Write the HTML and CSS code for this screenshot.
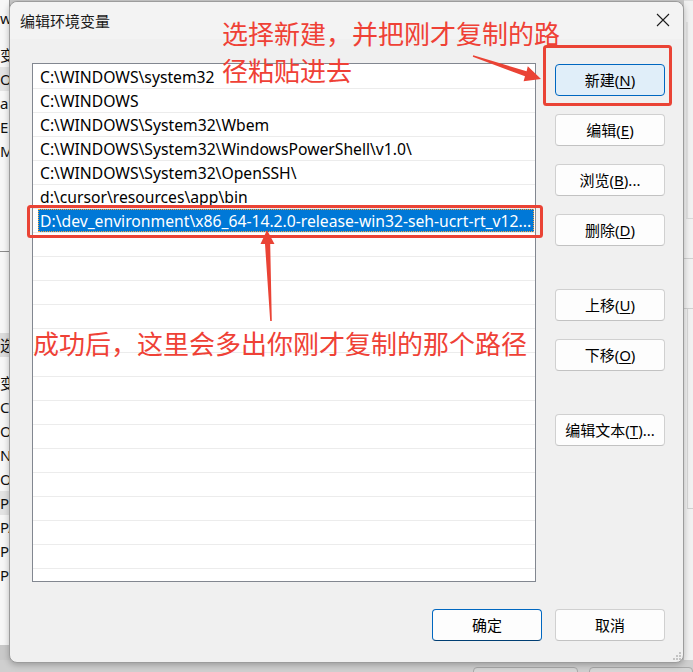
FILE: index.html
```html
<!DOCTYPE html>
<html lang="zh-CN">
<head>
<meta charset="utf-8">
<title>编辑环境变量</title>
<link rel="stylesheet" href="styles.css">
</head>
<body>
<div class="desk">
  <div class="back-left">
    <div class="bl-line first">w</div>
    <div class="bl-line gap1">变量</div>
    <div class="bl-line shade">Or</div>
    <div class="bl-line">a</div>
    <div class="bl-line">E</div>
    <div class="bl-line">M</div>
    <div class="bl-rule"></div>
    <div class="bl-line shade2">选择</div>
    <div class="bl-line gap2">变量</div>
    <div class="bl-line">Co</div>
    <div class="bl-line">Or</div>
    <div class="bl-line">NU</div>
    <div class="bl-line">OS</div>
    <div class="bl-line shade">Pa</div>
    <div class="bl-line">PA</div>
    <div class="bl-line">PR</div>
    <div class="bl-line">P</div>
  </div>
  <div class="back-right">
    <div class="br-a"></div>
    <div class="br-b"></div>
    <div class="br-c"></div>
    <div class="br-d"></div>
  </div>
  <div class="back-bottom">
    <div class="bb-btn"></div>
    <div class="bb-btn"></div>
  </div>

  <div class="dialog">
    <div class="titlebar">
      <span class="title">编辑环境变量</span>
      <svg class="close" width="16" height="16" viewBox="0 0 16 16"><path d="M2 2 L14 14 M14 2 L2 14" stroke="#1b1b1b" stroke-width="1.1" fill="none"/></svg>
    </div>
    <div class="main">
      <div class="list">
        <div class="row"><span class="txt">C:\WINDOWS\system32</span></div>
        <div class="row"><span class="txt">C:\WINDOWS</span></div>
        <div class="row"><span class="txt">C:\WINDOWS\System32\Wbem</span></div>
        <div class="row"><span class="txt">C:\WINDOWS\System32\WindowsPowerShell\v1.0\</span></div>
        <div class="row"><span class="txt">C:\WINDOWS\System32\OpenSSH\</span></div>
        <div class="row"><span class="txt">d:\cursor\resources\app\bin</span></div>
        <div class="row sel"><span class="txt">D:\dev_environment\x86_64-14.2.0-release-win32-seh-ucrt-rt_v12...</span></div>
        <div class="row"></div><div class="row"></div><div class="row"></div>
        <div class="row"></div><div class="row"></div><div class="row"></div>
        <div class="row"></div><div class="row"></div><div class="row"></div>
        <div class="row"></div><div class="row"></div><div class="row"></div>
        <div class="row"></div><div class="row"></div><div class="row"></div>
      </div>
      <div class="buttons">
        <button class="btn focus">新建(<u>N</u>)</button>
        <button class="btn">编辑(<u>E</u>)</button>
        <button class="btn">浏览(<u>B</u>)...</button>
        <button class="btn">删除(<u>D</u>)</button>
        <button class="btn spaced">上移(<u>U</u>)</button>
        <button class="btn">下移(<u>O</u>)</button>
        <button class="btn spaced">编辑文本(<u>T</u>)...</button>
      </div>
    </div>
    <div class="footer">
      <button class="btn default">确定</button>
      <button class="btn">取消</button>
    </div>
    <svg class="grip" width="10" height="10" viewBox="0 0 10 10">
      <rect x="7" y="1" width="2" height="2" fill="#c4c4c4"/>
      <rect x="4" y="4" width="2" height="2" fill="#c4c4c4"/>
      <rect x="7" y="4" width="2" height="2" fill="#c4c4c4"/>
      <rect x="1" y="7" width="2" height="2" fill="#c4c4c4"/>
      <rect x="4" y="7" width="2" height="2" fill="#c4c4c4"/>
      <rect x="7" y="7" width="2" height="2" fill="#c4c4c4"/>
    </svg>
  </div>

  <div class="note note-top">选择新建，并把刚才复制的路<br>径粘贴进去</div>
  <div class="note note-mid">成功后，这里会多出你刚才复制的那个路径</div>
  <svg class="marks" width="693" height="672" viewBox="0 0 693 672">
    <rect x="544.5" y="46.5" width="126" height="58" rx="2" fill="none" stroke="#ea4335" stroke-width="3"/>
    <rect x="28.5" y="206.5" width="513" height="30" rx="2" fill="none" stroke="#ea4335" stroke-width="3"/>
    <polygon points="473.2,55.3 526.6,71.3 527.8,66.3 541,79 523.6,81.3 525,76.3 472.8,56.7" fill="#ea4335"/>
    <polygon points="267,230 274.5,244 270.2,244 271.8,321 270.2,321 265,244 260.5,244" fill="#ea4335"/>
  </svg>
</div>
</body>
</html>
```

FILE: styles.css
```css
* { box-sizing: border-box; }
html, body { margin: 0; padding: 0; }
body {
  width: 693px;
  height: 672px;
  overflow: hidden;
  font-family: "Noto Sans", "Noto Sans CJK SC", sans-serif;
}
.desk {
  position: relative;
  width: 693px;
  height: 672px;
  background: #c9c9c9;
  overflow: hidden;
}
/* window behind, left edge */
.back-left {
  position: absolute;
  left: 0;
  top: 0;
  width: 10px;
  height: 645px;
  background: #f7f7f7;
  border-right: 1px solid #9a9a9a;
  overflow: hidden;
  font-size: 15px;
  color: #111;
  white-space: nowrap;
}
.bl-line { height: 24px; line-height: 24px; margin-left: -3px; padding-left: 3px; }
.bl-line.first { margin-top: 6px; }
.bl-line.gap1 { margin-top: 13px; }
.bl-line.gap2 { margin-top: 14px; }
.shade { background: #e3e3e3; }
.shade2 { background: #dcdcdc; }
.bl-rule { height: 82px; border-top: 1px solid #8c8c8c; margin-top: 88px; }
/* window behind, right edge */
.back-right {
  position: absolute;
  left: 684px;
  top: 0;
  width: 9px;
  height: 672px;
  background: #f1f1f1;
  border-top: 1px solid #dedede;
}
.br-a { height: 197px; border-bottom: 1px solid #d8d8d8; margin-top: 21px; border-left: 2px solid #e2e2e2; margin-left: 2px; }
.br-b { height: 40px; border-bottom: 1px solid #d0d0d0; }
.br-c { height: 50px; border-bottom: 1px solid #d0d0d0; }
.br-d { height: 200px; border-bottom: 1px solid #d0d0d0; border-left: 1px solid #d8d8d8; margin-left: 3px; }
.back-bottom {
  position: absolute;
  left: 0;
  top: 660px;
  width: 693px;
  height: 12px;
  background: #cfcfcf;
  display: flex;
  gap: 11px;
  padding-left: 473px;
  padding-top: 7px;
}
.bb-btn { width: 110px; height: 20px; border: 1px solid #a9a9a9; border-radius: 4px; background: #d6d6d6; }

/* dialog */
.dialog {
  position: absolute;
  left: 9px;
  top: 1px;
  width: 675px;
  height: 662px;
  background: #f0f0f0;
  border: 1px solid #9c9c9c;
  border-radius: 8px;
  box-shadow: 0 2px 6px rgba(0,0,0,0.25);
  display: flex;
  flex-direction: column;
  color: #000;
  font-size: 15px;
}
.titlebar {
  height: 37px;
  display: flex;
  align-items: center;
  justify-content: space-between;
  padding: 0 12px 1px 10px;
  background: #f3f3f3;
  border-radius: 8px 8px 0 0;
}
.title { font-size: 15px; color: #1a1a1a; }
.close { display: block; }
.main {
  display: flex;
  gap: 19px;
  padding: 24px 0 0 22px;
}
.list {
  width: 504px;
  height: 519px;
  background: #fff;
  border: 1px solid #828790;
  padding-top: 1px;
  overflow: hidden;
  font-size: 15.7px;
}
.row {
  height: 24px;
  border-bottom: 1px solid #ececec;
  padding: 0 1px 0 5px;
  display: flex;
  align-items: center;
  white-space: nowrap;
  overflow: hidden;
}
.txt { padding: 1px 2px 0; line-height: 22px; }
.sel .txt {
  flex: 1;
  background: #0078d7;
  color: #fff;
  outline: 1px dotted #ffa83a;
  outline-offset: -1px;
}
.buttons {
  display: flex;
  flex-direction: column;
  gap: 18px;
  padding-top: 1px;
}
.btn {
  width: 110px;
  height: 32px;
  font-family: "Noto Sans", "Noto Sans CJK SC", sans-serif;
  font-size: 15px;
  color: #000;
  background: #fdfdfd;
  border: 1px solid #d0d0d0;
  border-bottom-color: #c2c2c2;
  border-radius: 4px;
  padding: 0;
  line-height: 30px;
}
.btn u { text-underline-offset: 2px; }
.btn.spaced { margin-top: 25px; }
.btn.focus {
  background: #e0eef9;
  border: 1px solid #0067c0;
}
.btn.default {
  border: 1px solid #0067c0;
  border-bottom-color: #003e73;
}
.footer {
  display: flex;
  justify-content: flex-end;
  gap: 13px;
  padding: 27px 18px 0 0;
}
.grip { position: absolute; right: 1px; bottom: 1px; }

/* annotations */
.note {
  position: absolute;
  font-family: "Noto Sans CJK SC", sans-serif;
  font-size: 26px;
  line-height: 37px;
  color: #ef4136;
  white-space: nowrap;
}
.note-top { left: 222px; top: 14px; }
.note-mid { left: 33px; top: 324px; }
.marks { position: absolute; left: 0; top: 0; pointer-events: none; }
```
